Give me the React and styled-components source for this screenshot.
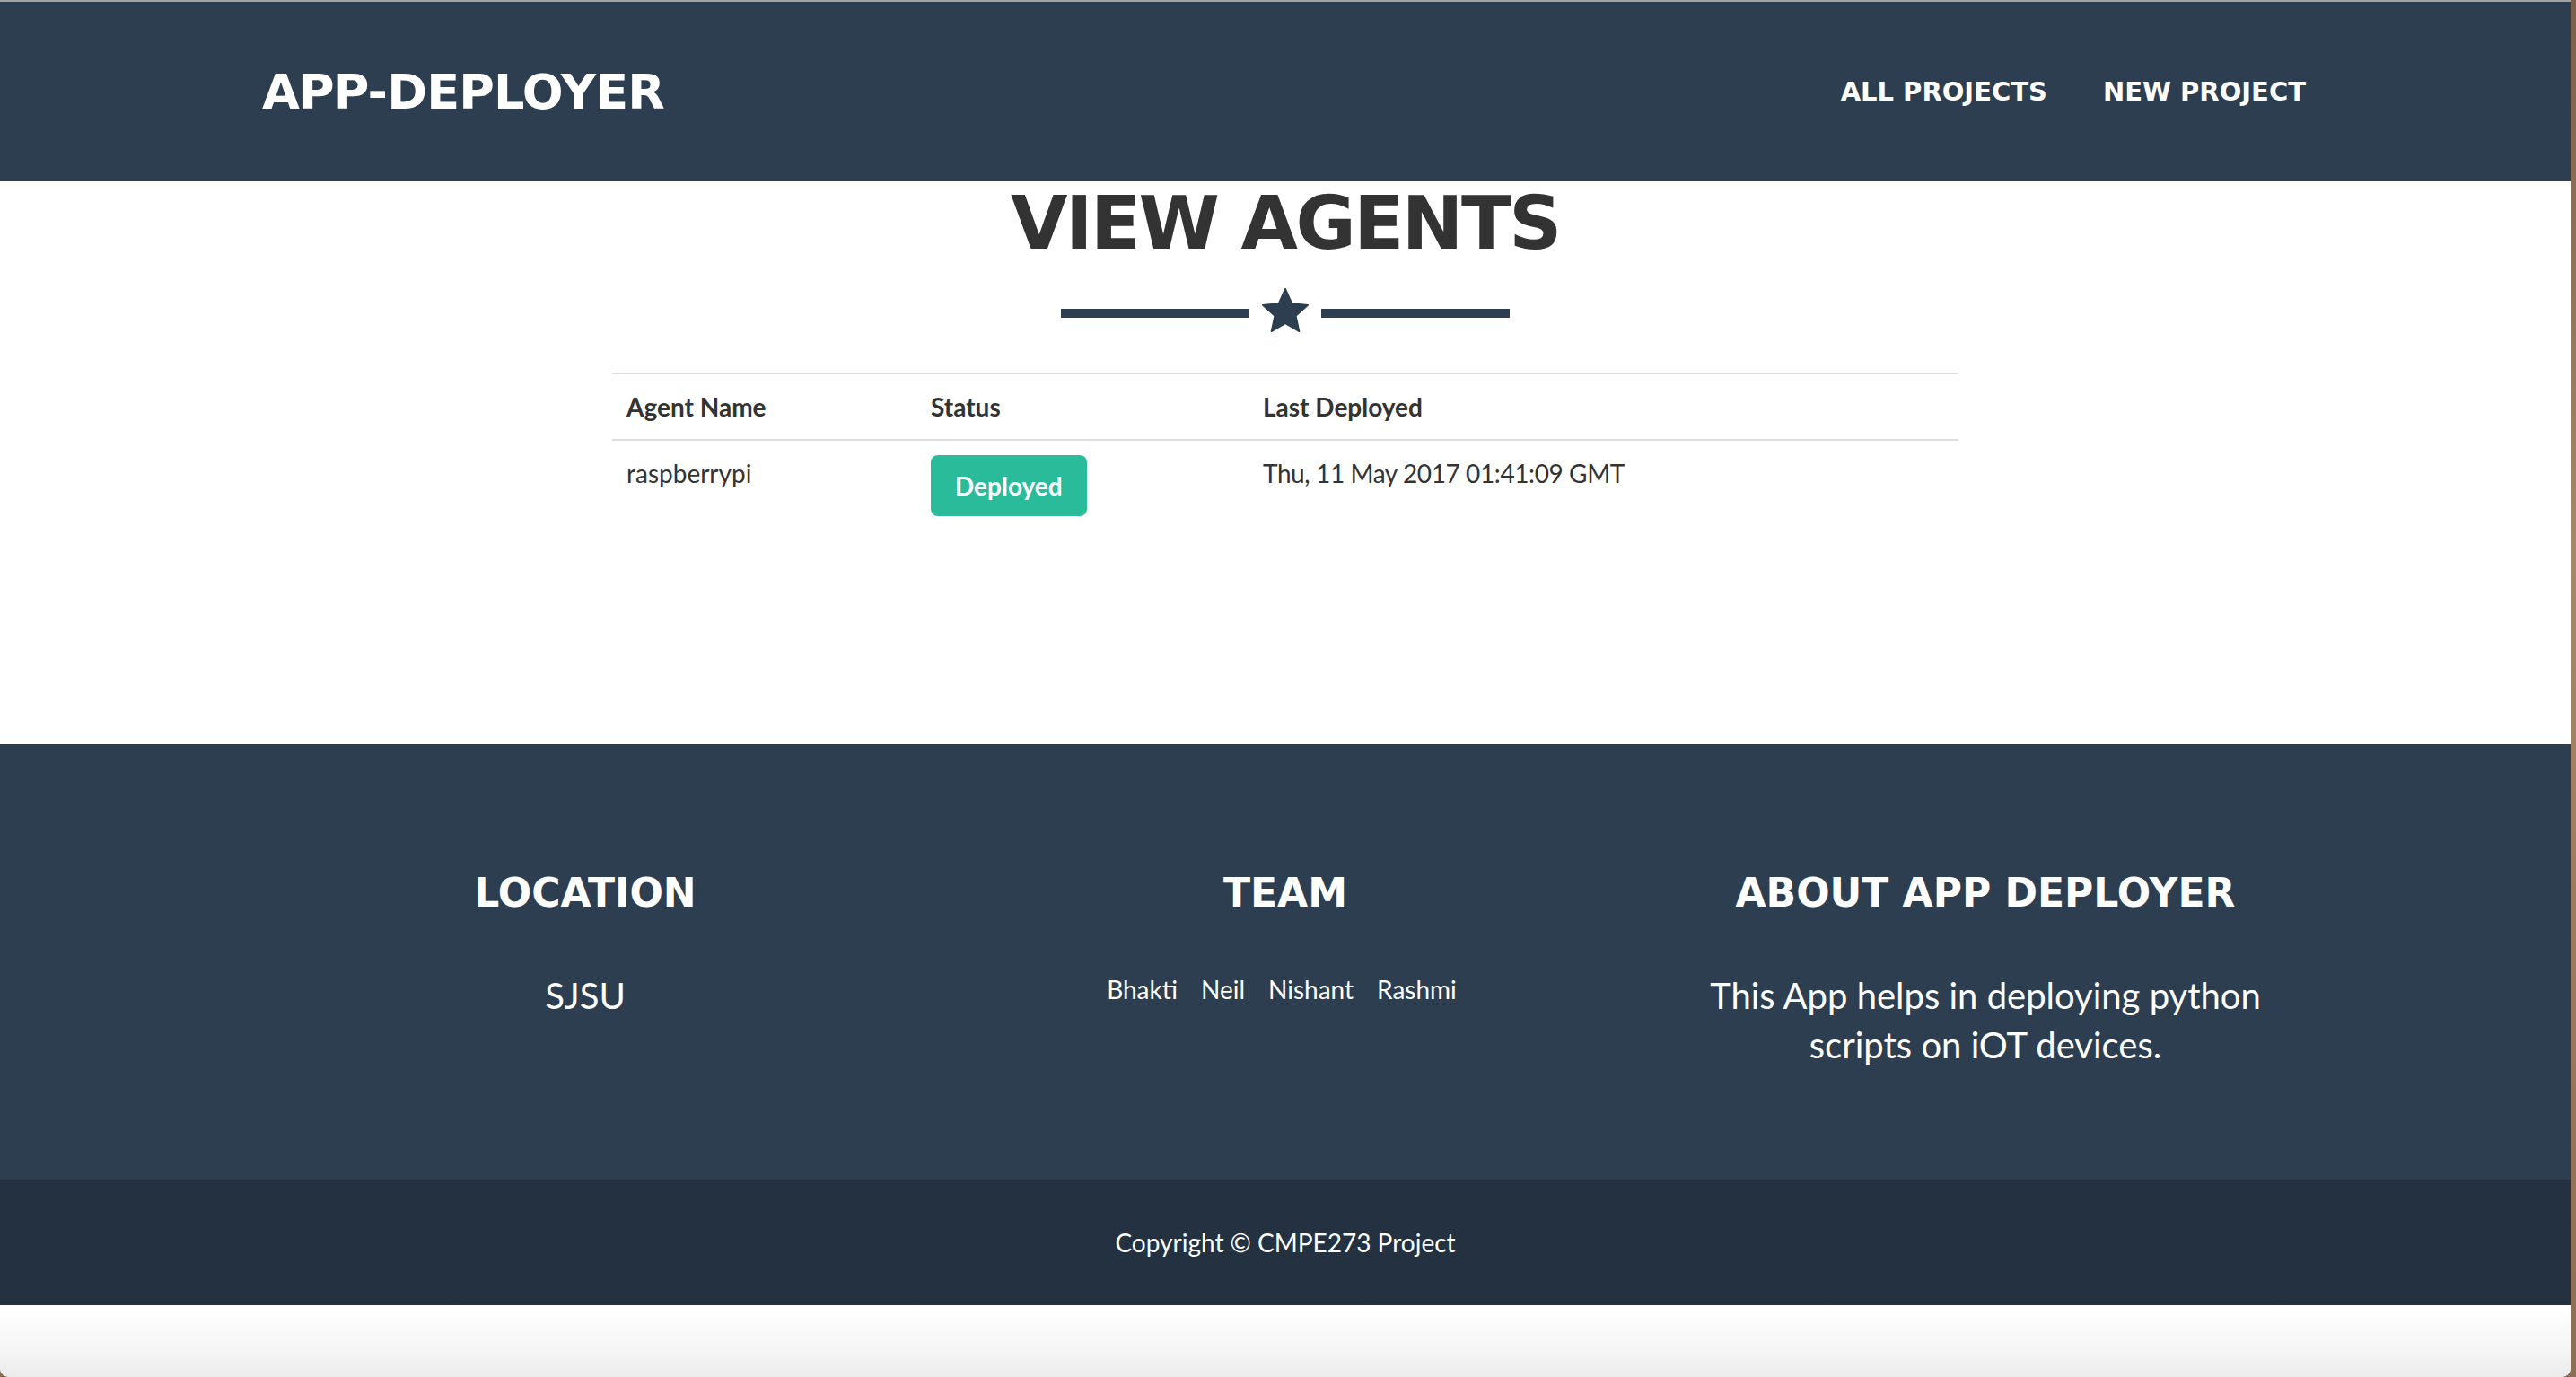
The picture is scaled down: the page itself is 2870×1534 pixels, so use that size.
import React from 'react';
import styled, { createGlobalStyle } from 'styled-components';

const GlobalStyle = createGlobalStyle`
    html, body {
        margin: 0;
        padding: 0;
    }
    body {
        background: linear-gradient(180deg, #7a5f4c 0%, #a7876a 40%, #8c6d55 100%);
        font-family: Lato, "Open Sans", sans-serif;
        color: #333;
    }
    * {
        box-sizing: border-box;
    }
`;

const headingFont = `"DejaVu Sans", Inter, sans-serif`;

const Desktop = styled.div`
    display: flex;
    min-height: 100vh;
`;

const Window = styled.div`
    flex: 1;
    margin-right: 6px;
    display: flex;
    flex-direction: column;
    background: #fff;
    border-top: 2px solid #a3a3a3;
    border-radius: 0 0 10px 10px;
    overflow: hidden;
`;

const Container = styled.div`
    width: 2340px;
    margin: 0 auto;
    padding: 0 ${(p) => (p.$flush ? 0 : 30)}px;
`;

const Navbar = styled.nav`
    height: 200px;
    background: #2c3e50;
    display: flex;
    align-items: center;
`;

const NavInner = styled(Container)`
    display: flex;
    align-items: center;
    justify-content: space-between;
`;

const Brand = styled.a`
    font-family: ${headingFont};
    font-weight: 700;
    font-size: 54px;
    letter-spacing: -0.8px;
    color: #fff;
    text-transform: uppercase;
    text-decoration: none;
`;

const NavList = styled.ul`
    display: flex;
    gap: 62px;
    list-style: none;
    margin: 0 3px 0 0;
    padding: 0;
`;

const NavLink = styled.a`
    font-family: ${headingFont};
    font-weight: 700;
    font-size: 29px;
    color: #fff;
    text-transform: uppercase;
    text-decoration: none;
`;

const Main = styled.section`
    height: 627px;
    padding-top: 2px;
    display: flex;
    flex-direction: column;
    align-items: center;
`;

const Title = styled.h2`
    margin: 0;
    font-family: ${headingFont};
    font-weight: 700;
    font-size: 82px;
    line-height: 90px;
    letter-spacing: -2.5px;
    color: #333;
    text-transform: uppercase;
`;

const Divider = styled.div`
    display: flex;
    align-items: flex-start;
    gap: 14px;
    height: 51px;
    margin-top: 27px;
`;

const DividerLine = styled.span`
    display: block;
    width: 210px;
    height: 10px;
    margin-top: 23px;
    background: #2c3e50;
`;

const StarIcon = styled.svg`
    width: 52px;
    height: 49px;
    fill: #2c3e50;
    stroke: #2c3e50;
    stroke-width: 3;
    stroke-linejoin: round;
`;

const Table = styled.div`
    width: 1500px;
    margin-top: 43px;
    border-top: 2px solid #ddd;
`;

const TableRow = styled.div`
    display: grid;
    grid-template-columns: 339px 370px 1fr;
    border-bottom: ${(p) => (p.$head ? '2px solid #ddd' : 'none')};
`;

const Cell = styled.div`
    padding: 16px;
    font-size: 28px;
    line-height: 40px;
    font-weight: ${(p) => (p.$head ? 700 : 400)};
    letter-spacing: ${(p) => (p.$tight ? '-0.4px' : 'normal')};
    color: #333;
`;

const StatusButton = styled.span`
    display: inline-block;
    height: 68px;
    line-height: 68px;
    padding: 0 27px;
    border-radius: 8px;
    background: #2abb9b;
    color: #fff;
    font-weight: 700;
    font-size: 28px;
`;

const FooterAbove = styled.footer`
    height: 485px;
    padding-top: 142px;
    background: #2c3e50;
    color: #fff;
`;

const FooterGrid = styled(Container)`
    display: grid;
    grid-template-columns: repeat(3, 1fr);
`;

const FooterCol = styled.div`
    text-align: center;
    padding: 0 45px;
`;

const FooterHeading = styled.h3`
    margin: 0 0 63px;
    font-family: ${headingFont};
    font-weight: 700;
    font-size: 44px;
    line-height: 48px;
    text-transform: uppercase;
`;

const FooterText = styled.p`
    margin: 0;
    font-size: 40px;
    line-height: 55px;
`;

const TeamList = styled.ul`
    display: flex;
    justify-content: center;
    gap: 26px;
    list-style: none;
    margin: 0 0 0 -8px;
    padding: 0;
    font-size: 28px;
    line-height: 40px;
`;

const FooterBelow = styled.div`
    height: 140px;
    padding-top: 50px;
    background: #233140;
    color: #fff;
    text-align: center;
    font-size: 28px;
    line-height: 40px;
`;

const BottomFade = styled.div`
    flex: 1;
    min-height: 80px;
    background: linear-gradient(180deg, #ffffff 0%, #f6f6f6 55%, #ececec 100%);
`;

const Star = () => (
    <StarIcon viewBox="3 1 94 89">
        <polygon points="50,2 63.22,31.8 95.65,35.17 71.4,56.95 78.21,88.83 50,72.5 21.79,88.83 28.6,56.95 4.35,35.17 36.78,31.8" />
    </StarIcon>
);

const agents = [
    { name: 'raspberrypi', status: 'Deployed', deployed: 'Thu, 11 May 2017 01:41:09 GMT' },
];

const team = ['Bhakti', 'Neil', 'Nishant', 'Rashmi'];

const App = () => {
    return (
        <Desktop>
            <GlobalStyle />
            <Window>
                <Navbar>
                    <NavInner>
                        <Brand href="#">App-Deployer</Brand>
                        <NavList>
                            <li><NavLink href="#">All Projects</NavLink></li>
                            <li><NavLink href="#">New Project</NavLink></li>
                        </NavList>
                    </NavInner>
                </Navbar>

                <Main>
                    <Title>View Agents</Title>
                    <Divider>
                        <DividerLine />
                        <Star />
                        <DividerLine />
                    </Divider>
                    <Table>
                        <TableRow $head>
                            <Cell $head>Agent Name</Cell>
                            <Cell $head>Status</Cell>
                            <Cell $head>Last Deployed</Cell>
                        </TableRow>
                        {agents.map((a) => (
                            <TableRow key={a.name}>
                                <Cell>{a.name}</Cell>
                                <Cell><StatusButton>{a.status}</StatusButton></Cell>
                                <Cell $tight>{a.deployed}</Cell>
                            </TableRow>
                        ))}
                    </Table>
                </Main>

                <FooterAbove>
                    <FooterGrid $flush>
                        <FooterCol>
                            <FooterHeading>Location</FooterHeading>
                            <FooterText>SJSU</FooterText>
                        </FooterCol>
                        <FooterCol>
                            <FooterHeading>Team</FooterHeading>
                            <TeamList>
                                {team.map((t) => <li key={t}>{t}</li>)}
                            </TeamList>
                        </FooterCol>
                        <FooterCol>
                            <FooterHeading>About App Deployer</FooterHeading>
                            <FooterText>This App helps in deploying python scripts on iOT devices.</FooterText>
                        </FooterCol>
                    </FooterGrid>
                </FooterAbove>
                <FooterBelow>Copyright © CMPE273 Project</FooterBelow>
                <BottomFade />
            </Window>
        </Desktop>
    );
};

export default App;
